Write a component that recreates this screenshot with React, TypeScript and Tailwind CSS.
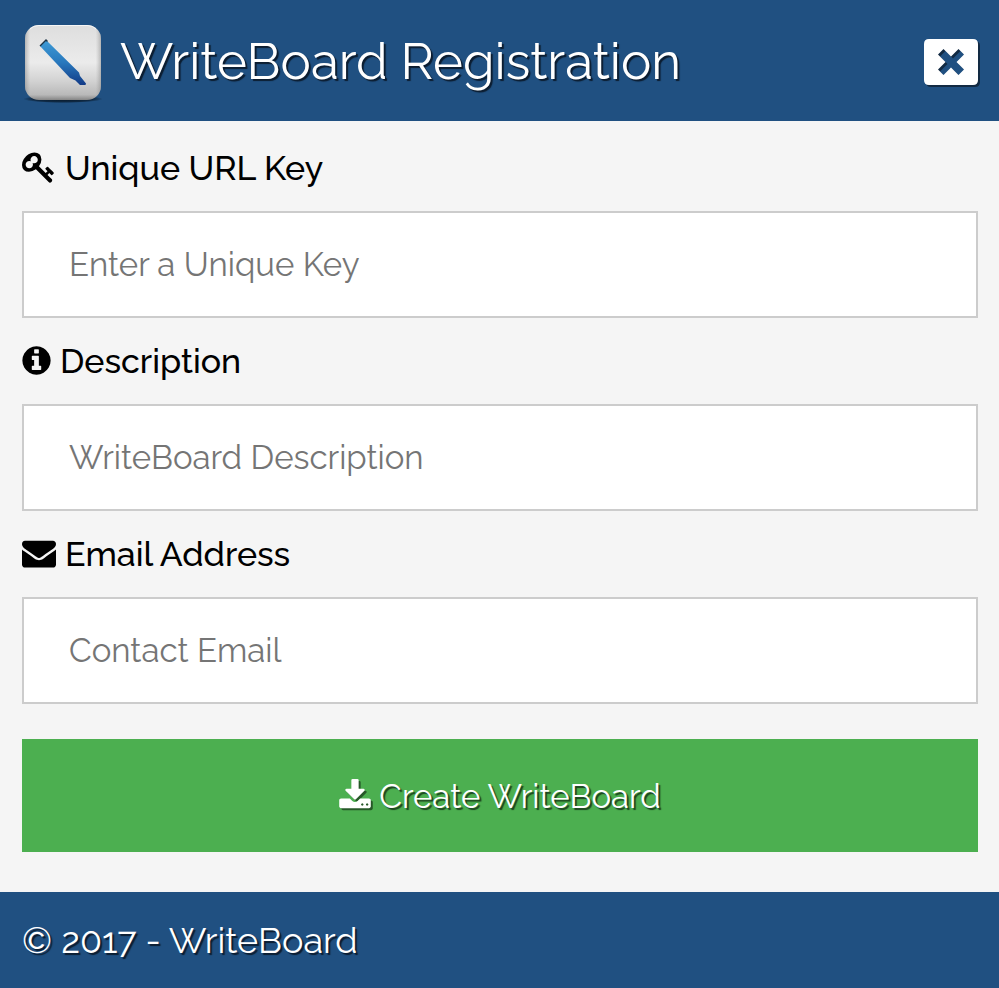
import type { ReactNode } from "react";

const KEY_PATH =
  "M832 512q0-80-56-136t-136-56-136 56-56 136q0 42 19 83-41-19-83-19-80 0-136 56t-56 136 56 136 136 56 136-56 56-136q0-42-19-83 41 19 83 19 80 0 136-56t56-136zm851 704q0 17-49 66t-66 49q-9 0-28.5-16t-36.5-33-38.5-40-24.5-26l-96 96 220 220q28 28 28 68 0 42-39 81t-81 39q-40 0-68-28l-671-671q-176 131-365 131-163 0-265.5-102.5t-102.5-265.5q0-160 95-313t248-248 313-95q163 0 265.5 102.5t102.5 265.5q0 189-131 365l355 355 96-96q-3-3-26-24.5t-40-38.5-33-36.5-16-28.5q0-17 49-66t66-49q13 0 23 10 6 6 46 44.5t82 79.5 86.5 86 73 78 28.5 41z";
const INFO_PATH =
  "M1152 1376v-160q0-14-9-23t-23-9h-96v-512q0-14-9-23t-23-9h-320q-14 0-23 9t-9 23v160q0 14 9 23t23 9h96v320h-96q-14 0-23 9t-9 23v160q0 14 9 23t23 9h448q14 0 23-9t9-23zm-128-896v-160q0-14-9-23t-23-9h-192q-14 0-23 9t-9 23v160q0 14 9 23t23 9h192q14 0 23-9t9-23zm640 416q0 209-103 385.5t-279.5 279.5-385.5 103-385.5-103-279.5-279.5-103-385.5 103-385.5 279.5-279.5 385.5-103 385.5 103 279.5 279.5 103 385.5z";
const ENVELOPE_PATH =
  "M1792 710v794q0 66-47 113t-113 47h-1472q-66 0-113-47t-47-113v-794q44 49 101 87 362 246 497 345 57 42 92.5 65.5t94.5 48 110 24.5h2q51 0 110-24.5t94.5-48 92.5-65.5q170-123 498-345 57-39 100-87zm0-294q0 79-49 151t-122 123q-376 261-468 325-10 7-42.5 31t-54 38.5-52 32.5-57.5 27-50 9h-2q-23 0-50-9t-57.5-27-52-32.5-54-38.5-42.5-31q-91-64-262-182.5t-205-142.5q-62-42-117-115.5t-55-136.5q0-78 41.5-130t118.5-52h1472q65 0 112.5 47t47.5 113z";
const DOWNLOAD_PATH =
  "M1344 1344q0-26-19-45t-45-19-45 19-19 45 19 45 45 19 45-19 19-45zm256 0q0-26-19-45t-45-19-45 19-19 45 19 45 45 19 45-19 19-45zm128-224v320q0 40-28 68t-68 28h-1472q-40 0-68-28t-28-68v-320q0-40 28-68t68-28h465l135 136q58 56 136 56t136-56l136-136h464q40 0 68 28t28 68zm-325-569q17 41-14 70l-448 448q-18 19-45 19t-45-19l-448-448q-31-29-14-70 17-39 59-39h256v-448q0-26 19-45t45-19h256q26 0 45 19t19 45v448h256q42 0 59 39z";

function Logo() {
  return (
    <svg viewBox="0 0 82 82" className="size-[82px] shrink-0" aria-hidden="true">
      <defs>
        <linearGradient id="tile" x1="0" y1="0" x2="0" y2="1">
          <stop offset="0" stopColor="#dedede" />
          <stop offset="0.5" stopColor="#ebebeb" />
          <stop offset="0.75" stopColor="#d2d2d2" />
          <stop offset="0.93" stopColor="#b9b9b9" />
          <stop offset="1" stopColor="#858585" />
        </linearGradient>
        <linearGradient id="side" x1="0" y1="0" x2="1" y2="0">
          <stop offset="0" stopColor="#777" stopOpacity="0.45" />
          <stop offset="0.07" stopColor="#999" stopOpacity="0" />
          <stop offset="0.93" stopColor="#999" stopOpacity="0" />
          <stop offset="1" stopColor="#777" stopOpacity="0.45" />
        </linearGradient>
        <linearGradient id="pen" x1="0" y1="0" x2="0" y2="1">
          <stop offset="0" stopColor="#3d9bd6" />
          <stop offset="0.5" stopColor="#2878bd" />
          <stop offset="1" stopColor="#123a86" />
        </linearGradient>
        <radialGradient id="ground">
          <stop offset="0" stopColor="#04101c" stopOpacity="0.9" />
          <stop offset="0.75" stopColor="#04101c" stopOpacity="0.6" />
          <stop offset="1" stopColor="#04101c" stopOpacity="0" />
        </radialGradient>
      </defs>
      <ellipse cx="41" cy="78" rx="40" ry="4" fill="url(#ground)" />
      <rect x="3" y="4" width="76" height="75" rx="14" fill="url(#tile)" />
      <rect x="3" y="4" width="76" height="75" rx="14" fill="url(#side)" />
      <path d="M8 8Q11 4.500 17 4.500H65Q71 4.500 74 8" fill="none" stroke="#f6f6f6" strokeWidth="1" />
      <path d="M18 25L24 19L57 51.500L58 55L64 62.500L63.500 64L58 64L53.500 59.500L48 57Z" fill="url(#pen)" />
      <path d="M18 25L24 19L25.500 20.500" fill="none" stroke="#1c3346" strokeWidth="1.400" />
    </svg>
  );
}

type GlyphProps = { path: string; viewBox: string; className: string };

function Glyph({ path, viewBox, className }: GlyphProps) {
  return (
    <svg viewBox={viewBox} className={className} fill="currentColor" aria-hidden="true">
      <path d={path} />
    </svg>
  );
}

type FieldProps = { id: string; type: string; label: string; placeholder: string; icon: ReactNode };

function Field({ id, type, label, placeholder, icon }: FieldProps) {
  return (
    <div>
      <label htmlFor={id} className="flex h-[86px] items-center gap-[9px] text-[34px] leading-10 font-medium text-black">
        {icon}
        {label}
      </label>
      <input
        id={id}
        type={type}
        placeholder={placeholder}
        className="block h-[107px] w-full border-2 border-[#ccc] bg-white px-[45px] text-[33px] text-black outline-none placeholder:text-[#757575] placeholder:opacity-100"
      />
    </div>
  );
}

export default function App() {
  return (
    <div className="flex min-h-screen flex-col bg-[#f5f5f5] font-[Raleway,Lato,sans-serif]">
      <header className="flex h-[121px] items-center bg-[#205081] pt-0.5 pr-[21px] pl-[22px] text-white">
        <Logo />
        <h1 className="ml-4 flex-1 text-[51px] leading-none font-normal [text-shadow:2px_2px_1px_#0c1d30]">
          WriteBoard Registration
        </h1>
        <button type="button" aria-label="Close" className="cursor-pointer">
          <svg viewBox="0 0 54 46" className="h-[46px] w-[54px] drop-shadow-[2px_2px_0_#122a43]" aria-hidden="true">
            <path
              fill="#fff"
              fillRule="evenodd"
              d="M5 0H49Q54 0 54 5V41Q54 46 49 46H5Q0 46 0 41V5Q0 0 5 0ZM19.500 10L14 15.500L21.500 23L14 30.500L19.500 36L27 28.500L34.500 36L40 30.500L32.500 23L40 15.500L34.500 10L27 17.500Z"
            />
          </svg>
        </button>
      </header>

      <main className="flex-1 pt-1 pr-[21px] pb-10 pl-[22px]">
        <form onSubmit={(event) => event.preventDefault()}>
          <Field
            id="key"
            type="text"
            label="Unique URL Key"
            placeholder="Enter a Unique Key"
            icon={<Glyph path={KEY_PATH} viewBox="0 0 1792 1792" className="-mt-0.5 size-[34px]" />}
          />
          <Field
            id="description"
            type="text"
            label="Description"
            placeholder="WriteBoard Description"
            icon={<Glyph path={INFO_PATH} viewBox="128 0 1536 1792" className="-mt-px h-[33px] w-[29px]" />}
          />
          <Field
            id="email"
            type="email"
            label="Email Address"
            placeholder="Contact Email"
            icon={<Glyph path={ENVELOPE_PATH} viewBox="0 0 1792 1792" className="-mt-0.5 size-[34px]" />}
          />
          <button
            type="submit"
            className="mt-[35px] flex h-[113px] w-full cursor-pointer items-center justify-center gap-2 bg-[#4caf50] pt-0.5 text-[33px] text-white [text-shadow:2px_2px_1px_#1c431e]"
          >
            <Glyph
              path={DOWNLOAD_PATH}
              viewBox="64 0 1664 1792"
              className="-mt-0.5 h-[34px] w-8 drop-shadow-[2px_2px_0_#265828]"
            />
            Create WriteBoard
          </button>
        </form>
      </main>

      <footer className="flex h-24 items-center bg-[#205081] px-[22px] text-[36px] leading-none text-white [text-shadow:2px_2px_1px_#0c1d30]">
        © 2017 - WriteBoard
      </footer>
    </div>
  );
}
